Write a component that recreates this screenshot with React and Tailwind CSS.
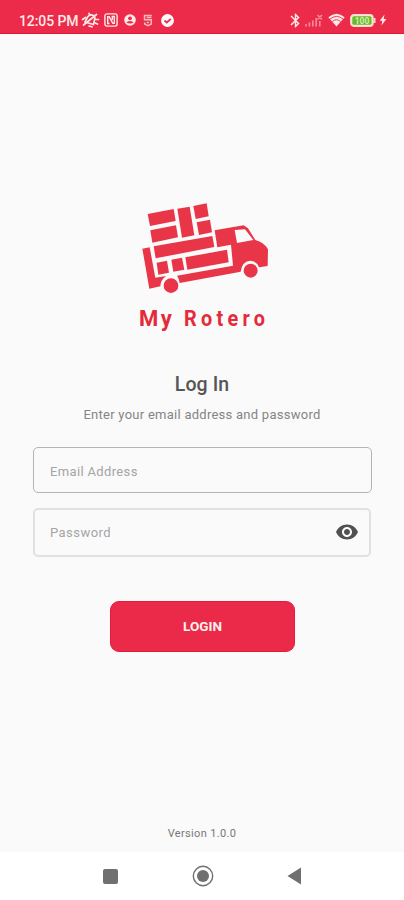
import React, { useState } from 'react';
import { MdBluetooth, MdVisibility, MdVisibilityOff } from 'react-icons/md';

const StatusBar = () => (
  <header className="flex h-[34px] shrink-0 items-center justify-between border-b border-[#e0182f] bg-[#ec2a4a] pt-[7px] pr-[17px] pl-[19px] text-[#ffe9e7]">
    <div className="flex items-center">
      <span className="w-[62px] whitespace-nowrap pt-px text-[14px] font-medium leading-4 tracking-[-0.1px]">12:05 PM</span>
      {/* muted bell */}
      <svg className="h-[16px] w-[19px]" viewBox="0 0 19 16" fill="none" stroke="currentColor" strokeWidth="1.7" strokeLinecap="round">
        <path d="M4 10 L6.5 5 Q9.5 1.5 13 4 Q14.5 5.5 13.5 8 L12.5 12.5 Z" />
        <path d="M2.5 13 L15.5 2.5 M1.5 7.5 L4.5 5.5 M8 1.5 L9 3 M15 7.5 H17.5 M14 11 L16.5 12 M8 14 L11 14.8" />
      </svg>
      <svg className="ml-[4px] h-[14px] w-[14px]" viewBox="0 0 14 14" fill="none" stroke="currentColor" strokeWidth="1.4">
        <rect x="0.9" y="0.9" width="12.2" height="12.2" rx="2" />
        <path d="M5.5 10.5 H3.7 V3.7 H5.2 L8.8 10.3 H10.3 V3.5 H8.3 V7" />
      </svg>
      <svg className="ml-[6px] h-[12px] w-[12px]" viewBox="0 0 12 12">
        <circle cx="6" cy="6" r="5.8" fill="currentColor" />
        <circle cx="6" cy="4.3" r="1.9" fill="#ec2a4a" />
        <path d="M2.4 8.8 Q3.2 6.9 6 6.9 Q8.8 6.9 9.6 8.8 Q6 10.3 2.4 8.8Z" fill="#ec2a4a" />
      </svg>
      <svg className="ml-[7px] h-[13px] w-[10px] opacity-75" viewBox="0 0 10 13" fill="none" stroke="currentColor" strokeWidth="1.5">
        <path d="M8.8 1.5 H1.5 V5.8 H8.3 V10 L5 11.7 L1.7 10 V8.5 M3.6 3.5 H8.5 M3.8 8.4 H6" />
      </svg>
      <svg className="ml-[8px] h-[13px] w-[13px]" viewBox="0 0 13 13">
        <circle cx="6.5" cy="6.5" r="6.4" fill="#fffafa" />
        <path d="M3.5 6.5 L5.8 8.5 L9.8 4.8" fill="none" stroke="#ec2a4a" strokeWidth="1.8" />
      </svg>
    </div>

    <div className="flex items-center">
      <MdBluetooth className="h-[17px] w-[17px]" />
      <svg className="ml-[1px] h-[13px] w-[18px] opacity-50" viewBox="0 0 18 13" fill="none" stroke="currentColor" strokeWidth="1.7">
        <path d="M1 12.5 V10 M4.4 12.5 V8.5 M7.8 12.5 V6.5 M11.2 12.5 V4 M14.8 12.5 V7 M12.5 1 L17 5.5 M17 1 L12.5 5.5" />
      </svg>
      <svg className="ml-[5px] h-[14px] w-[17px]" viewBox="0 0 17 14">
        <path d="M0.3 4.3 Q8.5 -3 16.7 4.3 L8.5 13.5 Z" fill="currentColor" />
        <path d="M2 6 Q8.5 0.8 15 6 M4.4 8.5 Q8.5 5 12.6 8.5" fill="none" stroke="#ec2a4a" strokeWidth="0.9" />
      </svg>
      <svg className="ml-[5px] h-[13px] w-[26px]" viewBox="0 0 26 13">
        <rect x="0.8" y="0.8" width="22.2" height="11.4" rx="3" fill="#e9f5c9" stroke="#ffd9d2" strokeWidth="1.4" />
        <rect x="2.3" y="2.3" width="19.2" height="8.4" rx="1.5" fill="#67b82d" />
        <path d="M24.5 4 V9" stroke="#ffd9d2" strokeWidth="2" />
        <text x="12" y="9.7" textAnchor="middle" fontSize="8.5" fontWeight="700" fill="#d3ecb0">100</text>
      </svg>
      <svg className="ml-[3px] h-[12px] w-[8px]" viewBox="0 0 8 12" fill="currentColor">
        <path d="M5.5 0.5 L0.7 6.7 H3.4 L2.4 11.5 L7.4 5.1 H4.6 Z" />
      </svg>
    </div>
  </header>
);

const TruckLogo = () => (
  <svg className="h-[105px] w-[145px] shrink-0" viewBox="0 0 435 315" fill="#e93548">
    {/* stacked boxes */}
    <path d="M53 57 L131 42 L137 78 L60 93 Z" />
    <path d="M61 106 L138 91 L144 127 L67 143 Z" />
    <path d="M142 41 L179 35 L193 121 L156 128 Z" />
    <path d="M190 33 L230 25 L236 64 L197 72 Z" />
    <path d="M200 82 L240 74 L246 112 L207 120 Z" />
    <path d="M71 154 L247 123 L253 156 L77 190 Z" />
    {/* load inside the bed */}
    <path d="M80 203 L111 197 L117 233 L85 239 Z" />
    <path d="M124 194 L156 188 L163 224 L130 230 Z" />
    <path d="M166 187 L291 164 L296 202 L172 224 Z" />
    {/* body and cab */}
    <path
      fillRule="evenodd"
      d="M37 161 L59 157 L76 248 L108 243 Q91 256 91 274 L58 281 Z M254 106 L341 91 L354 100 L376 135 Q403 142 414 163 L413 213 L387 217 Q379 197 360 197 Q336 199 332 230 L149 264 Q148 252 141 242 L309 212 L303 149 L262 157 Z M314 105 L321 144 L370 135 L345 103 Z"
    />
    <circle cx="123" cy="272" r="22" />
    <circle cx="362" cy="227" r="21" />
  </svg>
);

const App = () => {
  const [email, setEmail] = useState('');
  const [password, setPassword] = useState('');
  const [showPassword, setShowPassword] = useState(false);

  return (
    <div className="flex h-[900px] w-[404px] flex-col overflow-hidden bg-[#fafafa] font-['Roboto',sans-serif]">
      <StatusBar />

      <main className="flex flex-1 flex-col items-center pt-[161px]">
        <TruckLogo />
        <svg className="h-[36px] w-[145px] shrink-0" viewBox="0 0 145 36" fill="#e52a39" fontSize="22.5" fontWeight="700">
          <text transform="translate(9 26) scale(0.98 1)" letterSpacing="2.5">My</text>
          <text transform="translate(54 26) scale(0.88 1)" letterSpacing="4.9">Rotero</text>
        </svg>

        <h1 className="mt-[37px] text-[19.5px] font-medium leading-6 tracking-[0.1px] text-[#555555]">Log In</h1>
        <p className="mt-[9px] text-[13px] leading-[18px] tracking-[0.26px] text-[#858585]">Enter your email address and password</p>

        <form className="mt-[23px] flex w-full flex-col px-[33px]" onSubmit={(e) => e.preventDefault()}>
          <input
            type="email"
            value={email}
            onChange={(e) => setEmail(e.target.value)}
            placeholder="Email Address"
            className="h-[46px] w-[339px] rounded-[5px] border-[1.5px] border-[#b4b4b4] px-4 pt-[2px] text-[13px] tracking-[0.35px] text-[#555555] outline-none placeholder:text-[#a5a5a5]"
          />
          <div className="mt-[15px] flex h-[49px] w-[338px] items-center rounded-[5px] border-2 border-[#e1e1e1] pr-[10px] pl-[15px]">
            <input
              type={showPassword ? 'text' : 'password'}
              value={password}
              onChange={(e) => setPassword(e.target.value)}
              placeholder="Password"
              className="min-w-0 flex-1 pt-px text-[13px] tracking-[0.45px] text-[#555555] outline-none placeholder:text-[#a5a5a5]"
            />
            <button type="button" aria-label="Toggle password" className="pb-px" onClick={() => setShowPassword(!showPassword)}>
              {showPassword ? <MdVisibilityOff className="size-6 text-[#505050]" /> : <MdVisibility className="size-6 text-[#505050]" />}
            </button>
          </div>
          <button
            type="submit"
            className="mt-[44px] ml-[77px] h-[51px] w-[185px] rounded-[9px] border border-[#e51b3e] bg-[#eb2a49] text-[13.5px] font-bold text-[#fff0ee]"
          >
            LOGIN
          </button>
        </form>

        <p className="mt-auto mb-[10px] text-[11px] leading-4 tracking-[0.35px] text-[#777777]">Version 1.0.0</p>
      </main>

      <nav className="flex h-[48px] shrink-0 items-center justify-between bg-white pr-[102px] pl-[103px] text-[#707070]">
        <span className="size-[15px] rounded-[2px] bg-[#707070]" />
        <svg className="size-[22px]" viewBox="0 0 22 22">
          <circle cx="11" cy="11" r="9.7" fill="none" stroke="currentColor" strokeWidth="1.4" />
          <circle cx="11" cy="11" r="6" fill="currentColor" />
        </svg>
        <svg className="h-[18px] w-[15px]" viewBox="0 0 15 18">
          <path d="M0.5 9 L14 0.5 V17.5 Z" fill="currentColor" />
        </svg>
      </nav>
    </div>
  );
};

export default App;
